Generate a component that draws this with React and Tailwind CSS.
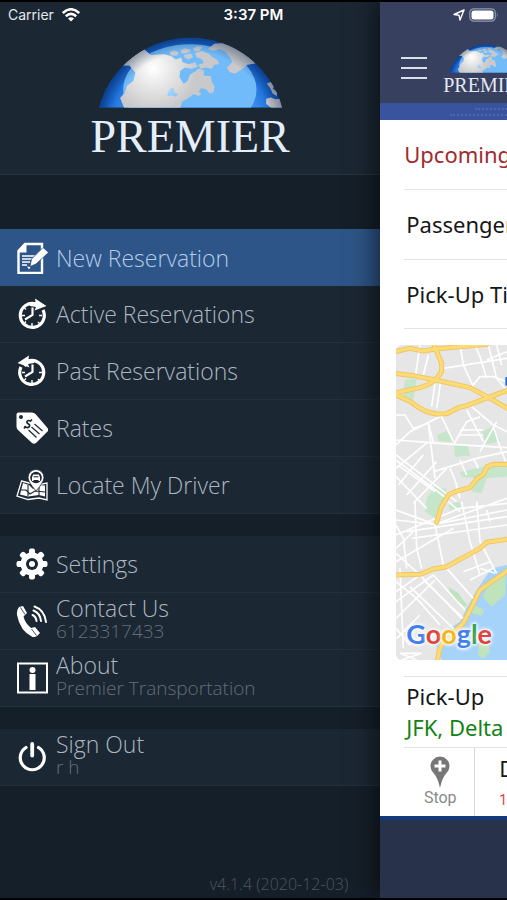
import React from "react";

function GlobeArt({ id, className }) {
  return (
    <svg viewBox="298 110 556 214" className={className} aria-hidden="true">
      <defs>
        <radialGradient id={id + "sea"} cx="576" cy="398" r="286" gradientUnits="userSpaceOnUse">
          <stop offset="0.72" stopColor="#3a90ee" />
          <stop offset="0.88" stopColor="#1f72dc" />
          <stop offset="1" stopColor="#1153b8" />
        </radialGradient>
        <radialGradient id={id + "glow"} cx="465" cy="205" r="130" gradientUnits="userSpaceOnUse">
          <stop offset="0" stopColor="#fff" stopOpacity="1" />
          <stop offset="1" stopColor="#fff" stopOpacity="0" />
        </radialGradient>
        <radialGradient id={id + "rim"} cx="576" cy="398" r="286" gradientUnits="userSpaceOnUse">
          <stop offset="0.85" stopColor="#001a40" stopOpacity="0" />
          <stop offset="1" stopColor="#001a40" stopOpacity="0.35" />
        </radialGradient>
        <clipPath id={id + "cap"}>
          <path d="M300 323A286 286 0 0 1 852 323Z" />
        </clipPath>
        <clipPath id={id + "land"}>
          <path d="M366 196L435 146L456 164L496 162L518 168L532 178L548 172L552 186L572 192L590 186L598 200L578 206L560 202L545 212L543 232L556 252L568 242L574 224L590 214L600 206L616 210L616 226L638 228L640 246L648 258L646 276L634 280L624 268L608 264L600 276L610 280L600 288L586 282L566 296L550 306L545 324H376L364 294L378 278L384 258L404 242L410 218L392 196Z" />
        </clipPath>
      </defs>
      <g clipPath={`url(#${id}cap)`}>
        <rect x="298" y="108" width="556" height="216" fill={`url(#${id}sea)`} />
        <ellipse cx="574" cy="268" rx="201" ry="136" fill="#72bbfa" />
        <g fill="#c9c9cb">
          <path d="M366 196L435 146L456 164L496 162L518 168L532 178L548 172L552 186L572 192L590 186L598 200L578 206L560 202L545 212L543 232L556 252L568 242L574 224L590 214L600 206L616 210L616 226L638 228L640 246L648 258L646 276L634 280L624 268L608 264L600 276L610 280L600 288L586 282L566 296L550 306L545 324H376L364 294L378 278L384 258L404 242L410 218L392 196Z" />
          <path d="M512 156L526 150L540 156L536 166L518 166ZM546 150L560 144L578 150L566 158L550 160ZM584 144L596 138L612 140L602 152L588 152ZM556 164L576 160L584 170L570 178L558 172ZM590 158L610 152L630 160L642 170L658 180L662 192L648 194L640 206L622 202L606 206L600 194L616 188L610 176L594 172Z" />
          <path d="M628 146L648 130L680 128L704 140L742 160L772 190L748 194L730 208L712 220L694 216L686 202L702 186L694 170L680 154L662 146L648 152Z" />
          <path d="M806 250L818 246L828 258L824 266L838 276L836 288L824 280L816 264ZM804 296L818 292L832 298L846 296L854 324H820L804 312Z" />
        </g>
        <path d="M510 272L518 262L526 266L528 278L540 282L532 290L520 286L506 288Z" fill="#72bbfa" />
        <circle cx="465" cy="205" r="130" fill={`url(#${id}glow)`} clipPath={`url(#${id}land)`} />
        <rect x="298" y="108" width="556" height="216" fill={`url(#${id}rim)`} />
      </g>
    </svg>
  );
}

function NewReservationIcon() {
  return (
    <svg viewBox="0 0 32 32" className="size-8" aria-hidden="true">
      <path d="M9 2H26V31H2.500V9Z" fill="none" stroke="#fff" strokeWidth="2.400" />
      <path d="M10.500 1V10.500H1.500Z" fill="#fff" />
      <path d="M6 14H19M6 17H16.500M6 20H14M6 23H11" stroke="#fff" strokeWidth="1.500" />
      <path d="M27 5.500L32.500 10.500L20 22L14 24.500L15.500 17Z" fill="#fff" stroke="#2d5587" strokeWidth="0.800" />
      <path d="M11 24.500L14.500 25L13 27.500Z" fill="#fff" />
    </svg>
  );
}

function ClockIcon({ flipped }) {
  return (
    <svg viewBox="0 0 32 32" className="size-8" aria-hidden="true">
      <g transform={flipped ? "translate(32 0) scale(-1 1)" : undefined}>
        <path d="M20 6A12 12 0 1 0 27 12" fill="none" stroke="#fff" strokeWidth="3.200" />
        <path d="M19 0.500L30.500 8L18.500 12.500L20 9L14 8L13 5L19.500 4Z" fill="#fff" />
      </g>
      <path d="M16.500 9.500V17L9 21.500" fill="none" stroke="#fff" strokeWidth="2.200" />
      <path d="M16 25V28M6 17.500H9M23 17.500H26M22 24L23.500 25.500M8.500 25L10 23.500M8.500 10L10 11.500" stroke="#fff" strokeWidth="1.400" />
    </svg>
  );
}

function RatesIcon() {
  return (
    <svg viewBox="0 0 32 32" className="size-8" aria-hidden="true">
      <path d="M2.500 0.500L16 0.500Q18 0.500 19.500 2L31.500 16Q33 18 31.500 19.500L20 31Q18 32.500 16 31L2 18Q0.500 16.500 0.500 14.500V2.500Q0.500 0.500 2.500 0.500Z" fill="#fff" />
      <circle cx="5" cy="5" r="2" fill="#1b2733" />
      <g stroke="#1b2733" fill="none">
        <path d="M15 9.500Q12.500 7.500 11 9.500Q10.500 11 12.500 12Q14.500 13 13 15Q11 16.500 8.500 14M16 7.500L14.500 9M9.500 14.500L8 16.500" strokeWidth="1.700" />
        <path d="M18.500 12L26.500 19M15.500 15L23.500 22M12.500 18L20.500 25.500" strokeWidth="1.200" />
      </g>
    </svg>
  );
}

function LocateIcon() {
  return (
    <svg viewBox="0 0 32 32" className="size-8" aria-hidden="true">
      <path d="M5.500 12L13 14L19 14L23.500 15.500L31 14V31L23 29L12 30.500L1 27Z" fill="none" stroke="#fff" strokeWidth="1.300" />
      <path d="M7 14L13 16L17 20L22 16L29 16.500V27.500L23 26L12 27.500L4 25.500Z" fill="#fff" />
      <path d="M4 21L10 21L14 25L19 22L29 23M12 16V27M23 16V26" fill="none" stroke="#1b2733" strokeWidth="1.100" />
      <path d="M20 22Q12 13 12 8.500A8 8 0 0 1 28 8.500Q28 13 20 22Z" fill="#fff" stroke="#1b2733" strokeWidth="0.800" />
      <circle cx="20" cy="8.500" r="5.800" fill="#1b2733" />
      <path d="M17.200 5.500H22.800L24 8V12H22.500V11H17.500V12H16V8Z" fill="#fff" />
      <path d="M17.500 7.800H22.500" stroke="#1b2733" />
    </svg>
  );
}

function SettingsIcon() {
  return (
    <svg viewBox="0 0 32 32" className="size-8" aria-hidden="true">
      <g fill="#fff">
        {[0, 45, 90, 135].map((angle) => (
          <rect key={angle} x="13" y="0.500" width="6" height="31" rx="2" transform={`rotate(${angle} 16 16)`} />
        ))}
        <circle cx="16" cy="16" r="11.500" />
      </g>
      <circle cx="16" cy="16" r="6" fill="#1b2733" />
      <circle cx="16" cy="16" r="3" fill="#fff" />
    </svg>
  );
}

function PhoneIcon() {
  return (
    <svg viewBox="0 0 32 32" className="size-8" aria-hidden="true">
      <path d="M3 2L7 1L11 8L7.500 11.500Q9 18 15 23L19 22L24 28Q20 33 16.500 32Q4 26 1 10Q0.500 5 3 2Z" fill="#fff" />
      <path d="M4.500 2.500L9 9.500M15.500 24L20.500 30.500" stroke="#1b2733" strokeWidth="0.800" />
      <g fill="none" stroke="#fff" strokeWidth="2" strokeLinecap="round">
        <path d="M16.500 10Q20 11.500 20.500 16" />
        <path d="M17.500 5.500Q24 8 25 16" />
        <path d="M18.500 1.500Q28.500 5 30 17" />
      </g>
    </svg>
  );
}

function AboutIcon() {
  return (
    <svg viewBox="0 0 32 32" className="size-8" aria-hidden="true">
      <rect x="2" y="1.500" width="29" height="29" fill="none" stroke="#fff" strokeWidth="2" />
      <circle cx="16.500" cy="8" r="3" fill="#fff" />
      <rect x="13.500" y="12" width="6" height="16" fill="#fff" />
    </svg>
  );
}

function PowerIcon() {
  return (
    <svg viewBox="0 0 32 32" className="size-8" aria-hidden="true">
      <path d="M10 6.500A12 12 0 1 0 22.500 6.500" fill="none" stroke="#fff" strokeWidth="3.200" strokeLinecap="round" />
      <path d="M16.200 3V14.500" stroke="#fff" strokeWidth="3.800" strokeLinecap="round" />
    </svg>
  );
}

function MenuRow({ icon, title, detail, active }) {
  return (
    <li>
      <button
        type="button"
        className={
          active
            ? "flex h-[57px] w-full items-center gap-2 bg-[#2d5587] pl-4 text-left text-[#b4cbea]"
            : "flex h-[57px] w-full items-center gap-2 border-b border-[#22303c] bg-[#1b2733] pl-4 text-left text-[#acb6c0]"
        }
      >
        <span className="shrink-0">{icon}</span>
        <span className={detail ? "flex flex-col pb-1 font-light whitespace-nowrap" : "flex flex-col font-light whitespace-nowrap"}>
          <span className="text-[23px] leading-6">{title}</span>
          {detail && <span className="text-[19px] leading-[22px] text-[#626e79]">{detail}</span>}
        </span>
      </button>
    </li>
  );
}

function StatusBar() {
  return (
    <div className="absolute inset-x-0 top-0 z-20 grid h-7 grid-cols-3 items-center border-t-2 border-black px-2 font-['Inter',sans-serif] text-sm text-[#e4e9ee]">
      <div className="flex items-center gap-2">
        <span>Carrier</span>
        <svg viewBox="0 0 18 14" className="h-3.5 w-[18px]" fill="none" stroke="#fff" strokeWidth="2.500" aria-hidden="true">
          <path d="M0.800 5Q9 -2.500 17.200 5M3.800 8.200Q9 3.500 14.200 8.200" />
          <path d="M6 10.500Q9 8 12 10.500L9 13.500Z" fill="#fff" stroke="none" />
        </svg>
      </div>
      <span className="text-center text-[15px] font-semibold whitespace-nowrap text-white">3:37 PM</span>
      <div className="flex items-center justify-end gap-1">
        <svg viewBox="0 0 12 12" className="size-3" fill="none" stroke="#fff" strokeWidth="1.400" strokeLinejoin="round" aria-hidden="true">
          <path d="M11 1L1 5.500L6 6.200L7 11Z" />
        </svg>
        <svg viewBox="0 0 30 14" className="h-3.5 w-[30px]" aria-hidden="true">
          <rect x="0.800" y="0.800" width="25.500" height="12.400" rx="4" fill="none" stroke="#9299ad" strokeWidth="1.200" />
          <rect x="2.500" y="2.500" width="22" height="9" rx="2.500" fill="#fff" />
          <path d="M27.800 4.500Q29.500 7 27.800 9.500Z" fill="#9299ad" />
        </svg>
      </div>
    </div>
  );
}

function Sidebar() {
  return (
    <aside className="flex w-3/4 shrink-0 flex-col bg-[#151f29]">
      <div className="flex h-[175px] flex-col items-center border-b border-[#26343f] bg-[#1b2733] pt-[37px]">
        <GlobeArt id="side" className="h-[71px] w-[185px]" />
        <span className="pt-1 font-['Liberation_Serif',serif] text-[46px] leading-[50px] text-[#e3eefa]">PREMIER</span>
      </div>
      <nav className="flex flex-col gap-[22px] pt-[54px]">
        <ul>
          <MenuRow active icon={<NewReservationIcon />} title="New Reservation" />
          <MenuRow icon={<ClockIcon />} title="Active Reservations" />
          <MenuRow icon={<ClockIcon flipped />} title="Past Reservations" />
          <MenuRow icon={<RatesIcon />} title="Rates" />
          <MenuRow icon={<LocateIcon />} title="Locate My Driver" />
        </ul>
        <ul>
          <MenuRow icon={<SettingsIcon />} title="Settings" />
          <MenuRow icon={<PhoneIcon />} title="Contact Us" detail="6123317433" />
          <MenuRow icon={<AboutIcon />} title="About" detail="Premier Transportation" />
        </ul>
        <ul>
          <MenuRow icon={<PowerIcon />} title="Sign Out" detail="r h" />
        </ul>
      </nav>
      <p className="mt-auto pr-8 pb-0.5 text-right text-base font-light text-[#4c5761]">v4.1.4 (2020-12-03)</p>
    </aside>
  );
}

function RouteMap() {
  return (
    <div className="relative ml-4 h-[315px] overflow-hidden rounded-l-md">
      <svg viewBox="48 30 333 945" preserveAspectRatio="xMinYMin slice" className="h-full w-full" aria-hidden="true">
        <rect x="48" y="30" width="333" height="945" fill="#e6e6e7" />
        <g fill="#c5e6cb">
          <path d="M75 135L110 130L100 195L68 185ZM172 300L200 288L222 322L175 318ZM222 332L262 328L270 362L224 365ZM305 290L335 275L362 318L318 328ZM240 412L320 392L381 395V425L320 430L305 475L275 470L290 430L245 425ZM140 490L165 455L200 462L190 500L175 555L135 530ZM205 510L235 500L245 515L210 525Z" />
        </g>
        <path d="M205 757L235 775L262 815L270 855L245 930L225 975H185L170 935L145 925L165 905L232 872L290 765L335 700L381 690V975H190Z" fill="#a6d3fa" />
        <path d="M48 975V740L205 757L262 815L240 860L165 905L150 925L170 935L172 975Z" fill="#e6e6e7" />
        <path d="M205 755L232 775L262 810L255 815L215 785ZM285 810L312 825L305 842L275 835ZM335 730L378 715L375 780L335 815L308 785ZM295 930L325 925L330 950L310 972L295 960Z" fill="#bfe3bb" />
        <g fill="none" stroke="#fff" strokeWidth="5">
          <path d="M120 30L105 130M145 60L130 120M182 140L170 220M165 145L155 215M190 100L381 70M240 30L250 90L280 155M285 30L300 65L320 130M325 30L350 130L375 160M275 155L300 125L340 125L381 140M320 75L381 50M350 30L365 90" />
          <path d="M48 240L75 240L100 280L145 265L160 320M48 330L90 290L230 220M48 315L220 328L381 338M185 245L220 320M145 265L165 430M260 225L310 320M275 215L340 270L381 290M220 330L260 260L300 245M240 285H310M240 300H310M300 350L350 260M340 275L365 350" />
          <path d="M48 360L230 500M48 375L200 490M48 400L145 320M55 450L130 360M80 480L170 380M100 505L200 400M48 425L140 520M60 395L165 470M160 410L290 370L381 350M210 400L225 435L240 490M240 375L260 420M280 370L295 400M365 350L381 390" />
          <path d="M48 525L165 568L381 490M48 555L165 568L381 525M48 600L240 520L381 505M80 590L381 545M95 610L381 570M165 568L190 690M105 500L110 640L125 700M48 570L70 610L80 700M205 500L240 530M245 500L270 620L300 720M290 500L300 620L350 715M320 525L330 560M48 655L120 720L245 850M48 640L110 580M48 680L220 580" />
          <path d="M48 800L160 720M48 770L150 700M60 700L70 940M90 755L230 890M130 735L250 850M160 720L255 825M200 700L280 790M250 710L330 680M270 735L340 700M48 740L110 790L180 870M48 850L165 735M50 910L120 840M65 975L125 955L60 955L110 975M48 880L90 930M300 700L345 715" />
        </g>
        <g fill="none" strokeLinejoin="round" strokeLinecap="round">
          {[
            ["#efc35a", 15],
            ["#fbdb77", 10],
          ].map(([color, width]) => (
            <g key={color} stroke={color} strokeWidth={width}>
              <path d="M44 50L90 40L130 48L165 42L320 28" />
              <path d="M160 25L185 85V110Q165 145 120 158L44 174" />
              <path d="M44 115L100 122L180 138L270 158L330 190L385 222" />
              <path d="M44 178L95 202Q130 232 170 237L200 236L235 218L260 212L385 165" />
              <path d="M385 388H340L322 395L310 418L290 432L270 458L225 470L205 480L182 520L170 562" />
              <path d="M44 720L120 718L160 702L200 695L300 640L320 622L385 612" />
              <path d="M385 705L300 765L275 815L250 865L190 920L178 945L172 980" />
            </g>
          ))}
        </g>
        <rect x="376" y="126" width="20" height="26" rx="3" fill="#2470cf" />
      </svg>
      <span className="absolute bottom-2 left-2.5 font-['Lato',sans-serif] text-[27px] leading-9 font-bold [text-shadow:0_0_3px_#fff,0_0_3px_#fff,0_0_4px_#fff,0_0_5px_#fff]">
        <span className="text-[#4180ee]">G</span>
        <span className="text-[#e2443a]">o</span>
        <span className="text-[#f4b613]">o</span>
        <span className="text-[#4180ee]">g</span>
        <span className="text-[#36a455]">l</span>
        <span className="text-[#e2443a]">e</span>
      </span>
    </div>
  );
}

function TripPanel() {
  return (
    <main className="relative z-10 flex min-w-0 flex-1 flex-col overflow-hidden bg-[#28324b] whitespace-nowrap">
      <header className="flex h-[103px] items-start gap-4 bg-[#37415f] pt-11 pl-[21px]">
        <button type="button" aria-label="Open menu" className="mt-[13px] flex w-[26px] shrink-0 flex-col gap-2">
          <span className="h-0.5 w-full bg-[#dcdfe9]" />
          <span className="h-0.5 w-full bg-[#dcdfe9]" />
          <span className="h-0.5 w-full bg-[#dcdfe9]" />
        </button>
        <div className="flex shrink-0 flex-col items-center">
          <GlobeArt id="top" className="h-[29px] w-[75px]" />
          <span className="font-['Liberation_Serif',serif] text-xl leading-6 text-[#e3e7f2]">PREMIER</span>
        </div>
      </header>
      <div className="flex h-[17px] flex-col items-end bg-[#3a539e] pt-[5px]">
        <span className="w-1/4 border-t-2 border-dotted border-[#4c67ab]" />
        <span className="mt-1 w-[45%] border-t-2 border-dotted border-[#4c67ab]" />
      </div>
      <section className="border-b-4 border-[#12397b] bg-white font-['Noto_Sans',sans-serif] text-[22px] text-[#161616]">
        <div className="pl-6">
          <h1 className="flex h-[70px] items-center border-b border-[#e4e4e6] text-[#a12a2e]">Upcoming</h1>
          <p className="flex h-[70px] items-center border-b border-[#e4e4e6] pl-0.5">Passenger</p>
          <p className="flex h-[69px] items-center border-b border-[#e4e4e6] pl-0.5">Pick-Up Time</p>
        </div>
        <div className="py-4">
          <RouteMap />
        </div>
        <div className="pl-6">
          <div className="border-y border-[#e4e4e6] pt-1 pb-1 pl-0.5 leading-[31px]">
            <p>Pick-Up</p>
            <p className="text-[#128212]">JFK, Delta</p>
          </div>
          <div className="flex h-[68px]">
            <button type="button" className="flex w-[71px] shrink-0 flex-col items-center border-r border-[#d4d8dd] pt-2 pl-0.5 font-['Roboto',sans-serif] text-base leading-5 text-[#8a8a8a]">
              <svg viewBox="0 0 20 32" className="h-8 w-5" aria-hidden="true">
                <path d="M10 32Q8 22 3.500 17A9.500 9.500 0 1 1 16.500 17Q12 22 10 32Z" fill="#777" />
                <path d="M10 4.500V15.500M4.500 10H15.500" stroke="#fff" strokeWidth="3" />
              </svg>
              Stop
            </button>
            <div className="flex flex-col pt-1 pl-6">
              <span className="leading-8">Drop-Off</span>
              <span className="font-['Roboto',sans-serif] text-sm leading-8 text-[#ee3b3b]">1 stop</span>
            </div>
          </div>
        </div>
      </section>
    </main>
  );
}

export default function App() {
  return (
    <div className="relative flex min-h-screen overflow-hidden border-b-2 border-black bg-[#151f29] font-['Open_Sans',sans-serif]">
      <StatusBar />
      <Sidebar />
      <div className="relative z-10 flex min-w-0 flex-1 shadow-[-4px_0_24px_rgba(0,0,0,0.6)]">
        <TripPanel />
      </div>
    </div>
  );
}
